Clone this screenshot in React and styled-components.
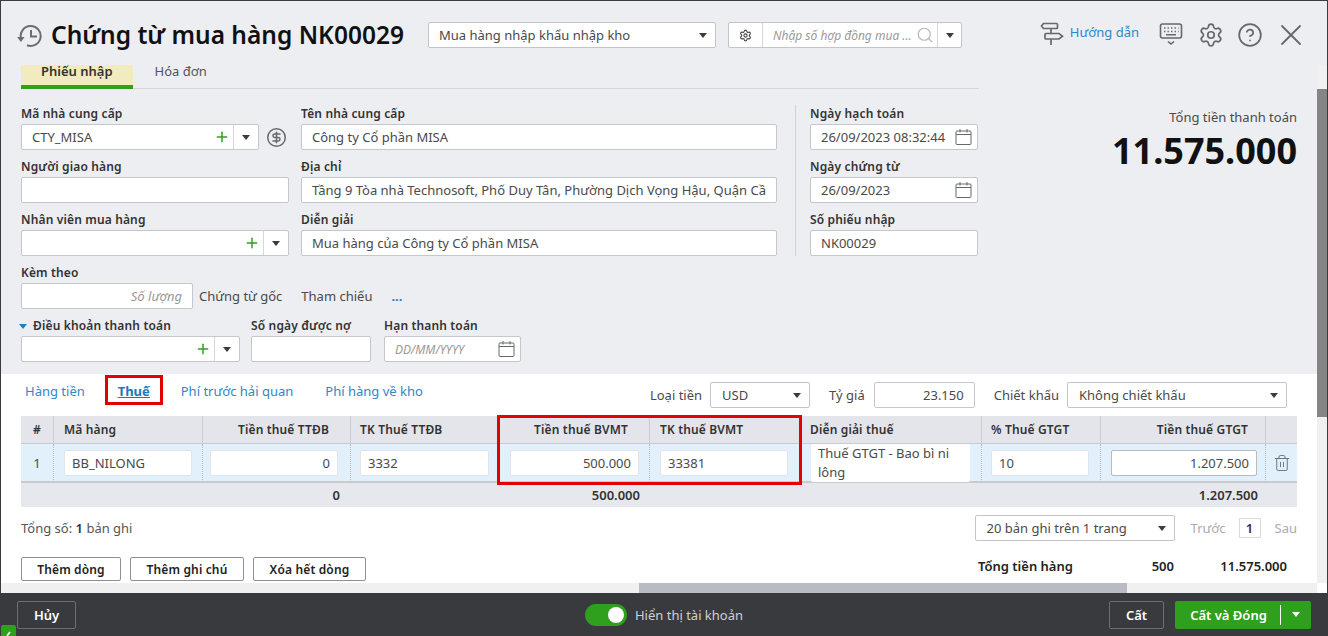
import React from 'react'
import styled, { createGlobalStyle } from 'styled-components'
import { CircleDollarSign, CircleHelp, Plus, Search, Settings, Trash2, X } from 'lucide-react'

const GlobalStyle = createGlobalStyle`
  html, body {
    margin: 0;
    padding: 0;
    background: #fff;
    overflow: hidden;
    font-family: "Noto Sans", sans-serif;
    font-size: 13px;
    color: #4a4a4a;
  }
  * { box-sizing: border-box; }
  input { font-family: inherit; }
`

const HistoryIcon = () => (
  <svg width="26" height="24" viewBox="0 0 26 24" fill="none" stroke="#6b6d70" strokeWidth="2">
    <path d="M5 14.5A10 10 0 1 1 11 21.3" />
    <path d="M15 6v6.5h6" />
    <path d="M1 13h7.5L5 18z" fill="#6b6d70" stroke="none" />
  </svg>
)

const GuideIcon = () => (
  <svg width="24" height="24" viewBox="0 0 24 24" fill="none" stroke="#66686b" strokeWidth="1.7">
    <path d="M3.5 1.5h13a1 1 0 0 1 1 1v3a1 1 0 0 1-1 1h-13l-2-2.5z" />
    <path d="M6 11.5h13l3.5 2.7L19 17H6a1 1 0 0 1-1-1v-3.5a1 1 0 0 1 1-1z" />
    <path d="M11 6.5v5M11 17v6" />
  </svg>
)

const KeyboardIcon = () => (
  <svg width="24" height="24" viewBox="0 0 24 24" fill="none" stroke="#66686b" strokeWidth="1.6">
    <rect x="1.5" y="2" width="21" height="14" rx="2" />
    <path d="M5 6h1.4M8.5 6h1.4M12 6h1.4M15.5 6h1.4M19 6h.6M5 9.5h1.4M8.5 9.5h1.4M12 9.5h1.4M15.5 9.5h1.4M19 9.5h.6M7 12.7h10" />
    <path d="M9 19.5l3 2.5 3-2.5" />
  </svg>
)

const CalendarIcon = () => (
  <svg width="17" height="18" viewBox="0 0 17 18" fill="none" stroke="#66686b" strokeWidth="1">
    <rect x="1" y="3" width="15" height="13.5" rx="1" />
    <path d="M1 6.5h15M5 1v3.5M12 1v3.5" />
  </svg>
)

const Window = styled.div`
  position: relative;
  width: 1328px;
  height: 636px;
  display: flex;
  flex-direction: column;
  border: 1px solid #3a3b3f;
  border-bottom: 0;
  background: #eceef1;
  overflow: hidden;
`

const Header = styled.header`
  height: 64px;
  display: flex;
  align-items: flex-start;
  padding: 21px 18px 0 15px;
`

const TitleIcon = styled.div`
  width: 26px;
  height: 24px;
  margin: 2px 9px 0 0;
`

const Title = styled.h1`
  width: 377px;
  flex: none;
  margin: -2px 0 0 0;
  font-size: 24.5px;
  line-height: 30px;
  font-weight: 600;
  color: #111;
  white-space: nowrap;
`

const Caret = styled.span`
  display: inline-block;
  flex: none;
  width: 0;
  height: 0;
  border-left: 4px solid transparent;
  border-right: 4px solid transparent;
  border-top: 5px solid ${(props) => props.$color || '#3c3c3c'};
`

const Select = styled.div`
  width: ${(props) => props.$width}px;
  height: 26px;
  padding: 0 8px 0 ${(props) => props.$pad || 10}px;
  display: flex;
  align-items: center;
  justify-content: space-between;
  flex: none;
  background: #fff;
  border: 1px solid #c2c5ca;
  border-radius: 2px;
  color: #4a4a4a;
  font-size: 13px;
  white-space: nowrap;
`

const HeadGroup = styled.div`
  width: 234px;
  height: 26px;
  margin-left: 12px;
  display: flex;
  align-items: center;
  background: #fff;
  border: 1px solid #c2c5ca;
  border-radius: 2px;
`

const HeadGroupCell = styled.div`
  height: 100%;
  min-width: 0;
  flex: ${(props) => (props.$grow ? 1 : 'none')};
  width: ${(props) => (props.$width ? `${props.$width}px` : 'auto')};
  display: flex;
  align-items: center;
  justify-content: ${(props) => (props.$grow ? 'flex-start' : 'center')};
  padding: ${(props) => (props.$grow ? '0 3px 0 10px' : '0')};
  border-left: ${(props) => (props.$divided ? '1px solid #d4d6d9' : '0')};
  overflow: hidden;
`

const Placeholder = styled.span`
  flex: 1;
  min-width: 0;
  font-size: 12px;
  font-style: italic;
  color: #9a9a9a;
  white-space: nowrap;
  overflow: hidden;
`

const HeadActions = styled.div`
  margin-left: auto;
  display: flex;
  align-items: flex-start;
  color: #66686b;
`

const GuideLink = styled.a`
  margin: 0 20px 0 6px;
  font-size: 13px;
  line-height: 20px;
  color: #2f87c8;
  white-space: nowrap;
`

const HeadIcon = styled.span`
  display: flex;
  margin: ${(props) => props.$top || 0}px 0 0 ${(props) => props.$gap || 0}px;
  color: #66686b;
`

const Body = styled.main`
  flex: 1;
  min-height: 0;
  display: flex;
`

const Pane = styled.div`
  width: 1316px;
  display: flex;
  flex-direction: column;
`

const TopSection = styled.section`
  height: 309px;
  padding-left: 20px;
  display: flex;
  flex-direction: column;
`

const DocTabs = styled.nav`
  width: 958px;
  height: 24px;
  display: flex;
  border-bottom: 1px solid #d5d7da;
`

const DocTab = styled.a`
  height: 24px;
  padding: 0 20px 0 ${(props) => (props.$active ? 20 : 22)}px;
  line-height: 12px;
  font-size: 13px;
  font-weight: ${(props) => (props.$active ? 600 : 400)};
  color: ${(props) => (props.$active ? '#333' : '#555')};
  background: ${(props) => (props.$active ? '#f2ebc0' : 'transparent')};
  border-bottom: ${(props) => (props.$active ? '4px solid #2ea01e' : '0')};
`

const TopBody = styled.div`
  display: flex;
  padding-top: 16px;
`

const FormArea = styled.div`
  width: 958px;
  flex: none;
`

const FormColumns = styled.div`
  display: flex;
  align-items: flex-start;
`

const FormColumn = styled.div`
  width: ${(props) => props.$width}px;
  margin-left: ${(props) => props.$left || 0}px;
  padding-left: ${(props) => props.$pad || 0}px;
  border-left: ${(props) => (props.$divided ? '1px solid #d0d2d6' : '0')};
  flex: none;
  & > div:last-child {
    margin-bottom: ${(props) => (props.$divided ? 0 : 8)}px;
  }
`

const Field = styled.div`
  width: ${(props) => (props.$width ? `${props.$width}px` : 'auto')};
  margin-bottom: 8px;
`

const Label = styled.label`
  display: block;
  height: 19px;
  line-height: 18px;
  font-size: 12px;
  font-weight: 600;
  letter-spacing: 0.15px;
  color: #333;
  white-space: nowrap;
`

const TextInput = styled.input`
  display: block;
  width: 100%;
  height: 26px;
  padding: 0 ${(props) => (props.$pad ? props.$pad : 10)}px;
  background: #fff;
  border: 1px solid #c4c7cc;
  border-radius: 2px;
  outline: 0;
  font-size: 13px;
  color: #4a4a4a;
  text-align: ${(props) => props.$align || 'left'};
  &::placeholder {
    color: #999;
    font-style: italic;
    opacity: 1;
  }
`

const Combo = styled.div`
  width: ${(props) => (props.$width ? `${props.$width}px` : '100%')};
  height: 26px;
  display: flex;
  align-items: center;
  flex: none;
  background: #fff;
  border: 1px solid #c4c7cc;
  border-radius: 2px;
  font-size: 13px;
  color: #4a4a4a;
`

const ComboText = styled.span`
  flex: 1;
  padding-left: 10px;
  white-space: nowrap;
  overflow: hidden;
  font-size: ${(props) => (props.$muted ? 12 : 13)}px;
  color: ${(props) => (props.$muted ? '#999' : '#4a4a4a')};
  font-style: ${(props) => (props.$muted ? 'italic' : 'normal')};
`

const ComboCaret = styled.span`
  width: 25px;
  height: 100%;
  flex: none;
  display: flex;
  align-items: center;
  justify-content: center;
  border-left: 1px solid #d4d6d9;
`

const PlusIcon = styled(Plus)`
  flex: none;
  margin-right: 3px;
  color: #2ea01e;
`

const CalendarSlot = styled.span`
  display: flex;
  flex: none;
  margin-right: 5px;
`

const SupplierRow = styled.div`
  display: flex;
  align-items: center;
  gap: 7px;
  color: #66686b;
`

const AttachRow = styled.div`
  display: flex;
  align-items: center;
  height: 26px;
`

const AttachInput = styled.div`
  width: 172px;
  flex: none;
`

const AttachText = styled.span`
  margin-left: ${(props) => props.$left}px;
  color: ${(props) => props.$color || '#4a4a4a'};
  font-weight: ${(props) => props.$weight || 400};
  white-space: nowrap;
`

const PaymentRow = styled.div`
  display: flex;
`

const PaymentField = styled(Field)`
  margin-left: ${(props) => props.$left || 0}px;
  margin-bottom: 0;
`

const PaymentLabel = styled(Label)`
  position: relative;
  padding-left: 12px;
`

const ExpandCaret = styled.span`
  position: absolute;
  left: -2px;
  top: 7px;
  width: 0;
  height: 0;
  border-left: 4px solid transparent;
  border-right: 4px solid transparent;
  border-top: 5px solid #1f7fc4;
`

const TotalBox = styled.div`
  flex: 1;
  padding: 3px 20px 0 0;
  text-align: right;
`

const TotalLabel = styled.div`
  font-size: 13px;
  line-height: 18px;
  color: #4a4a4a;
`

const TotalValue = styled.div`
  margin-top: 4px;
  font-size: 36px;
  line-height: 42px;
  font-weight: 700;
  color: #111;
`

const BottomSection = styled.section`
  position: relative;
  height: 209px;
  background: #fff;
  padding-left: 20px;
`

const ToolRow = styled.div`
  height: 42px;
  display: flex;
  align-items: flex-start;
  padding-right: 30px;
`

const SectionTabs = styled.nav`
  display: flex;
  align-items: flex-start;
  padding: 1px 0 0 4px;
`

const SectionTab = styled.a`
  margin: 1px ${(props) => props.$gap || 20}px 0 0;
  font-size: 13px;
  line-height: 30px;
  color: #2f87c8;
  white-space: nowrap;
`

const ActiveTab = styled.a`
  width: 58px;
  height: 30px;
  margin-right: 18px;
  border: 3px solid #e30000;
  text-align: center;
  font-size: 13px;
  line-height: 26px;
  font-weight: 700;
  color: #1b78bd;
  text-decoration: underline;
`

const ToolControls = styled.div`
  margin-left: auto;
  padding-top: 8px;
  display: flex;
  align-items: center;
`

const ToolLabel = styled.span`
  margin: 0 ${(props) => props.$right || 8}px 0 ${(props) => props.$left || 0}px;
  font-size: 13px;
  color: #4a4a4a;
  white-space: nowrap;
`

const RateField = styled.div`
  width: 101px;
  flex: none;
`

const TableWrap = styled.div`
  position: relative;
  width: 1276px;
`

const Highlight = styled.div`
  position: absolute;
  left: 476px;
  top: -1px;
  width: 305px;
  height: 70px;
  border: 3px solid #e30000;
  pointer-events: none;
`

const Row = styled.div`
  display: grid;
  grid-template-columns: 32px 149px 148px 149px 150px 151px 181px 119px 165px 32px;
  height: ${(props) => props.$height}px;
  background: ${(props) => props.$bg};
  border-bottom: ${(props) => (props.$line ? `${props.$line}px solid #c9cbcf` : '0')};
`

const HeadCell = styled.div`
  display: flex;
  align-items: center;
  justify-content: ${(props) =>
    props.$align === 'right' ? 'flex-end' : props.$align === 'center' ? 'center' : 'flex-start'};
  padding: 0 ${(props) => props.$right || 0}px 0 ${(props) => props.$left || 9}px;
  border-left: 1px solid #c9cbcf;
  font-size: 12px;
  font-weight: 600;
  letter-spacing: 0.15px;
  color: #333;
  white-space: nowrap;
  &:first-child {
    border-left: 0;
    padding: 0;
  }
`

const BodyCell = styled.div`
  display: flex;
  align-items: center;
  justify-content: center;
  padding: 0 ${(props) => props.$right || 10}px 0 ${(props) => props.$left || 10}px;
  border-left: 1px dotted #b9bcc0;
  color: #4a4a4a;
  &:first-child {
    border-left: 0;
  }
`

const CellInput = styled(TextInput)`
  border-color: ${(props) => (props.$focus ? '#b7babf' : '#e2e4e7')};
`

const CellNote = styled.div`
  width: 100%;
  height: 38px;
  padding: 0 6px 0 7px;
  background: #fff;
  border-radius: 2px;
  font-size: 13px;
  line-height: 19px;
  color: #4a4a4a;
`

const TrashIcon = styled(Trash2)`
  flex: none;
  color: #66686b;
`

const SumCell = styled.div`
  display: flex;
  align-items: center;
  justify-content: flex-end;
  padding-right: ${(props) => props.$right || 0}px;
  font-size: 13px;
  font-weight: 600;
  color: #333;
`

const PagerRow = styled.div`
  height: 50px;
  display: flex;
  align-items: flex-start;
  justify-content: space-between;
  padding-top: 8px;
  width: 1276px;
`

const RecordCount = styled.div`
  height: 26px;
  line-height: 26px;
  color: #555;
  b {
    font-weight: 600;
    color: #333;
  }
`

const Pager = styled.div`
  display: flex;
  align-items: center;
  height: 26px;
`

const PagerLink = styled.span`
  margin-left: ${(props) => props.$left}px;
  color: #a9abae;
`

const PageBox = styled.span`
  width: 22px;
  height: 20px;
  margin-left: 13px;
  border: 1px solid #d9dbde;
  display: flex;
  align-items: center;
  justify-content: center;
  font-weight: 600;
  color: #333;
`

const ActionRow = styled.div`
  display: flex;
  align-items: flex-start;
  width: 1266px;
`

const ActionButton = styled.button`
  width: ${(props) => props.$width}px;
  height: 24px;
  margin-right: 9px;
  padding: 0;
  background: #fff;
  border: 1px solid #8d9094;
  border-radius: 2px;
  font-family: inherit;
  font-size: 12px;
  font-weight: 600;
  letter-spacing: 0.15px;
  color: #222;
`

const Summary = styled.div`
  margin-left: auto;
  width: 309px;
  display: grid;
  grid-template-columns: 1fr 60px 113px;
  line-height: 18px;
  font-size: 13px;
  font-weight: 600;
  color: #222;
`

const SummaryValue = styled.span`
  text-align: right;
`

const HScroll = styled.div`
  height: 10px;
  background: #f0f0f0;
  padding-left: 638px;
`

const HThumb = styled.div`
  width: 488px;
  height: 100%;
  background: #b8bcc2;
`

const VScroll = styled.div`
  width: 10px;
  display: flex;
  flex-direction: column;
`

const VTrack = styled.div`
  flex: 1;
  background: #f0f0f0;
  padding-top: 24px;
`

const VThumb = styled.div`
  height: 328px;
  background: #858585;
`

const VCorner = styled.div`
  height: 10px;
  background: #fff;
`

const Footer = styled.footer`
  position: relative;
  height: 43px;
  margin: 0 -1px;
  flex: none;
  display: grid;
  grid-template-columns: 1fr auto 1fr;
  align-items: center;
  padding: 0 17px;
  background: #393a3e;
`

const FooterButton = styled.button`
  width: ${(props) => props.$width}px;
  height: 28px;
  padding: 0;
  background: transparent;
  border: 1px solid #6c6e72;
  border-radius: 2px;
  font-family: inherit;
  font-size: 13px;
  font-weight: 600;
  color: #fff;
`

const ToggleGroup = styled.div`
  display: flex;
  align-items: center;
  gap: 8px;
  color: #cfd0d2;
  font-size: 13px;
`

const Toggle = styled.span`
  width: 42px;
  height: 22px;
  padding: 3px;
  display: flex;
  justify-content: flex-end;
  background: #2ea01e;
  border-radius: 11px;
`

const ToggleKnob = styled.span`
  width: 16px;
  height: 16px;
  border-radius: 50%;
  background: #fff;
`

const FooterRight = styled.div`
  display: flex;
  justify-content: flex-end;
  gap: 11px;
`

const SplitButton = styled.div`
  width: 136px;
  height: 28px;
  display: flex;
  align-items: center;
  background: #2ea01e;
  border-radius: 2px;
  color: #fff;
  font-size: 13px;
  font-weight: 600;
`

const SplitLabel = styled.span`
  width: 106px;
  height: 20px;
  padding-left: 2px;
  line-height: 20px;
  text-align: center;
  border-right: 1px solid #fff;
`

const SplitCaret = styled.span`
  flex: 1;
  display: flex;
  justify-content: center;
`

const CornerBadge = styled.div`
  position: absolute;
  left: 1px;
  bottom: 0;
  width: 15px;
  height: 11px;
  background: #2ea01e;
  border-radius: 2px 2px 0 0;
  display: flex;
  justify-content: center;
  align-items: flex-end;
`

const docColumns = [
  { head: '#', align: 'center' },
  { head: 'Mã hàng', left: 10 },
  { head: 'Tiền thuế TTĐB', align: 'right', right: 21 },
  { head: 'TK Thuế TTĐB' },
  { head: 'Tiền thuế BVMT', align: 'right', right: 21 },
  { head: 'TK thuế BVMT', left: 10 },
  { head: 'Diễn giải thuế' },
  { head: '% Thuế GTGT' },
  { head: 'Tiền thuế GTGT', align: 'right', right: 17 },
  { head: '' },
]

const LabeledInput = ({ label, value }) => (
  <Field>
    <Label>{label}</Label>
    <TextInput readOnly defaultValue={value} />
  </Field>
)

const DateField = ({ label, value }) => (
  <Field>
    <Label>{label}</Label>
    <Combo>
      <ComboText>{value}</ComboText>
      <CalendarSlot>
        <CalendarIcon />
      </CalendarSlot>
    </Combo>
  </Field>
)

const AddCombo = ({ value, width }) => (
  <Combo $width={width}>
    <ComboText>{value}</ComboText>
    <PlusIcon size={16} strokeWidth={2.2} />
    <ComboCaret>
      <Caret />
    </ComboCaret>
  </Combo>
)

const App = () => (
  <Window>
    <GlobalStyle />
    <Header>
      <TitleIcon>
        <HistoryIcon />
      </TitleIcon>
      <Title>Chứng từ mua hàng NK00029</Title>
      <Select $width={288}>
        Mua hàng nhập khẩu nhập kho
        <Caret />
      </Select>
      <HeadGroup>
        <HeadGroupCell $width={33}>
          <Settings size={13} color="#444" />
        </HeadGroupCell>
        <HeadGroupCell $grow $divided>
          <Placeholder>Nhập số hợp đồng mua ...</Placeholder>
          <Search size={18} color="#b5b7ba" strokeWidth={1.5} />
        </HeadGroupCell>
        <HeadGroupCell $width={24} $divided>
          <Caret />
        </HeadGroupCell>
      </HeadGroup>
      <HeadActions>
        <GuideIcon />
        <GuideLink>Hướng dẫn</GuideLink>
        <KeyboardIcon />
        <HeadIcon $gap={15}>
          <Settings size={26} strokeWidth={1.6} />
        </HeadIcon>
        <HeadIcon $gap={13}>
          <CircleHelp size={26} strokeWidth={1.6} />
        </HeadIcon>
        <HeadIcon $gap={10} $top={-5}>
          <X size={36} strokeWidth={1.2} />
        </HeadIcon>
      </HeadActions>
    </Header>
    <Body>
      <Pane>
        <TopSection>
          <DocTabs>
            <DocTab $active>Phiếu nhập</DocTab>
            <DocTab>Hóa đơn</DocTab>
          </DocTabs>
          <TopBody>
            <FormArea>
              <FormColumns>
                <FormColumn $width={268}>
                  <Field>
                    <Label>Mã nhà cung cấp</Label>
                    <SupplierRow>
                      <AddCombo value="CTY_MISA" width={238} />
                      <CircleDollarSign size={21} strokeWidth={1.7} />
                    </SupplierRow>
                  </Field>
                  <LabeledInput label="Người giao hàng" value="" />
                  <Field>
                    <Label>Nhân viên mua hàng</Label>
                    <AddCombo value="" />
                  </Field>
                </FormColumn>
                <FormColumn $width={476} $left={12}>
                  <LabeledInput label="Tên nhà cung cấp" value="Công ty Cổ phần MISA" />
                  <LabeledInput
                    label="Địa chỉ"
                    value="Tầng 9 Tòa nhà Technosoft, Phố Duy Tân, Phường Dịch Vọng Hậu, Quận Cầu Giấy, Hà Nội"
                  />
                  <LabeledInput label="Diễn giải" value="Mua hàng của Công ty Cổ phần MISA" />
                </FormColumn>
                <FormColumn $width={183} $left={18} $pad={14} $divided>
                  <DateField label="Ngày hạch toán" value="26/09/2023 08:32:44" />
                  <DateField label="Ngày chứng từ" value="26/09/2023" />
                  <LabeledInput label="Số phiếu nhập" value="NK00029" />
                </FormColumn>
              </FormColumns>
              <Field>
                <Label>Kèm theo</Label>
                <AttachRow>
                  <AttachInput>
                    <TextInput readOnly placeholder="Số lượng" $align="right" />
                  </AttachInput>
                  <AttachText $left={6}>Chứng từ gốc</AttachText>
                  <AttachText $left={19}>Tham chiếu</AttachText>
                  <AttachText $left={19} $color="#1f7fc4" $weight={700}>
                    ...
                  </AttachText>
                </AttachRow>
              </Field>
              <PaymentRow>
                <PaymentField $width={219}>
                  <PaymentLabel>
                    <ExpandCaret />
                    Điều khoản thanh toán
                  </PaymentLabel>
                  <AddCombo value="" />
                </PaymentField>
                <PaymentField $width={120} $left={11}>
                  <Label>Số ngày được nợ</Label>
                  <TextInput readOnly />
                </PaymentField>
                <PaymentField $width={137} $left={13}>
                  <Label>Hạn thanh toán</Label>
                  <Combo>
                    <ComboText $muted>DD/MM/YYYY</ComboText>
                    <CalendarSlot>
                      <CalendarIcon />
                    </CalendarSlot>
                  </Combo>
                </PaymentField>
              </PaymentRow>
            </FormArea>
            <TotalBox>
              <TotalLabel>Tổng tiền thanh toán</TotalLabel>
              <TotalValue>11.575.000</TotalValue>
            </TotalBox>
          </TopBody>
        </TopSection>
        <BottomSection>
          <ToolRow>
            <SectionTabs>
              <SectionTab>Hàng tiền</SectionTab>
              <ActiveTab>Thuế</ActiveTab>
              <SectionTab $gap={32}>Phí trước hải quan</SectionTab>
              <SectionTab>Phí hàng về kho</SectionTab>
            </SectionTabs>
            <ToolControls>
              <ToolLabel>Loại tiền</ToolLabel>
              <Select $width={100} $pad={11}>
                USD
                <Caret />
              </Select>
              <ToolLabel $left={19} $right={9}>
                Tỷ giá
              </ToolLabel>
              <RateField>
                <TextInput readOnly defaultValue="23.150" $align="right" />
              </RateField>
              <ToolLabel $left={19}>Chiết khấu</ToolLabel>
              <Select $width={220} $pad={11}>
                Không chiết khấu
                <Caret />
              </Select>
            </ToolControls>
          </ToolRow>
          <TableWrap>
            <Row $height={28} $bg="#e3e5ea" $line={1}>
              {docColumns.map((column, index) => (
                <HeadCell key={index} $align={column.align} $right={column.right} $left={column.left}>
                  {column.head}
                </HeadCell>
              ))}
            </Row>
            <Row $height={39} $bg="#e2f0fc" $line={2}>
              <BodyCell>1</BodyCell>
              <BodyCell>
                <CellInput readOnly defaultValue="BB_NILONG" $pad={7} />
              </BodyCell>
              <BodyCell $left={7} $right={12}>
                <CellInput readOnly defaultValue="0" $align="right" $pad={7} />
              </BodyCell>
              <BodyCell $left={9}>
                <CellInput readOnly defaultValue="3332" $pad={7} />
              </BodyCell>
              <BodyCell>
                <CellInput readOnly defaultValue="500.000" $align="right" $pad={7} />
              </BodyCell>
              <BodyCell $right={12}>
                <CellInput readOnly defaultValue="33381" $pad={7} />
              </BodyCell>
              <BodyCell $right={11}>
                <CellNote>Thuế GTGT - Bao bì ni lông</CellNote>
              </BodyCell>
              <BodyCell $left={9} $right={11}>
                <CellInput readOnly defaultValue="10" $pad={7} />
              </BodyCell>
              <BodyCell $left={10} $right={8}>
                <CellInput readOnly defaultValue="1.207.500" $align="right" $pad={7} $focus />
              </BodyCell>
              <BodyCell>
                <TrashIcon size={18} strokeWidth={1.2} />
              </BodyCell>
            </Row>
            <Row $height={24} $bg="#e7e8ee">
              <span />
              <span />
              <SumCell $right={10}>0</SumCell>
              <span />
              <SumCell $right={9}>500.000</SumCell>
              <span />
              <span />
              <span />
              <SumCell $right={7}>1.207.500</SumCell>
              <span />
            </Row>
            <Highlight />
          </TableWrap>
          <PagerRow>
            <RecordCount>
              Tổng số: <b>1</b> bản ghi
            </RecordCount>
            <Pager>
              <Select $width={200} $pad={11}>
                20 bản ghi trên 1 trang
                <Caret />
              </Select>
              <PagerLink $left={16}>Trước</PagerLink>
              <PageBox>1</PageBox>
              <PagerLink $left={14}>Sau</PagerLink>
            </Pager>
          </PagerRow>
          <ActionRow>
            <ActionButton $width={100}>Thêm dòng</ActionButton>
            <ActionButton $width={114}>Thêm ghi chú</ActionButton>
            <ActionButton $width={113}>Xóa hết dòng</ActionButton>
            <Summary>
              <span>Tổng tiền hàng</span>
              <SummaryValue>500</SummaryValue>
              <SummaryValue>11.575.000</SummaryValue>
            </Summary>
          </ActionRow>
        </BottomSection>
        <HScroll>
          <HThumb />
        </HScroll>
      </Pane>
      <VScroll>
        <VTrack>
          <VThumb />
        </VTrack>
        <VCorner />
      </VScroll>
    </Body>
    <Footer>
      <div>
        <FooterButton $width={59}>Hủy</FooterButton>
      </div>
      <ToggleGroup>
        <Toggle>
          <ToggleKnob />
        </Toggle>
        Hiển thị tài khoản
      </ToggleGroup>
      <FooterRight>
        <FooterButton $width={55}>Cất</FooterButton>
        <SplitButton>
          <SplitLabel>Cất và Đóng</SplitLabel>
          <SplitCaret>
            <Caret $color="#fff" />
          </SplitCaret>
        </SplitButton>
      </FooterRight>
      <CornerBadge>
        <svg width="6" height="5" viewBox="0 0 6 5">
          <path d="M1 5l3-4" stroke="#fff" strokeWidth="1.6" />
        </svg>
      </CornerBadge>
    </Footer>
  </Window>
)

export default App
